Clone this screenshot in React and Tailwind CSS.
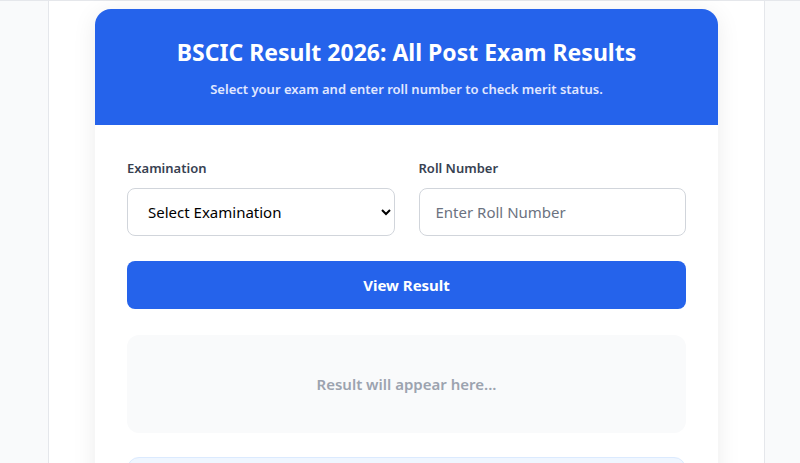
export default function App() {
  return (
    <div className="min-h-screen bg-[#f9fafb] border-t border-[#e5e7eb]" style={{ fontFamily: '"Noto Sans", sans-serif' }}>
      <div className="ml-[48px] w-[717px] min-h-[462px] bg-white border-x border-[#e5e7eb] px-[46px] pt-[8px] pb-6">
        <div className="rounded-2xl bg-white shadow-[0_4px_24px_rgba(0,0,0,0.08)] overflow-hidden">
          <div className="bg-[#2563eb] h-[116px] flex flex-col items-center justify-center text-center">
            <h1 className="text-white text-[23px] font-bold leading-[32px] mt-[2px]">BSCIC Result 2026: All Post Exam Results</h1>
            <p className="text-[#e0e7ff] text-[13px] font-semibold mt-[12px]">Select your exam and enter roll number to check merit status.</p>
          </div>
          <div className="px-8 pt-[33px] pb-8">
            <div className="grid grid-cols-2 gap-6">
              <div className="flex flex-col">
                <label className="text-[13px] font-semibold text-[#374151] leading-5 mb-[10px]">Examination</label>
                <select className="h-12 rounded-lg border border-[#d1d5db] bg-white px-4 text-[15px] text-black">
                  <option>Select Examination</option>
                </select>
              </div>
              <div className="flex flex-col">
                <label className="text-[13px] font-semibold text-[#374151] leading-5 mb-[10px]">Roll Number</label>
                <input className="h-12 rounded-lg border border-[#d1d5db] bg-white px-4 text-[15px] text-black placeholder:text-[#6b7280] outline-none" placeholder="Enter Roll Number" />
              </div>
            </div>
            <button className="mt-[25px] w-full h-12 rounded-lg bg-[#2563eb] text-white font-bold text-[15px]">View Result</button>
            <div className="mt-[26px] h-[98px] rounded-xl bg-[#f9fafb] flex items-center justify-center text-[#9ca3af] font-semibold text-[15px]">
              Result will appear here...
            </div>
            <div className="mt-6 h-[80px] rounded-xl bg-[#eff6ff] border border-[#dbeafe]"></div>
          </div>
        </div>
      </div>
    </div>
  );
}
